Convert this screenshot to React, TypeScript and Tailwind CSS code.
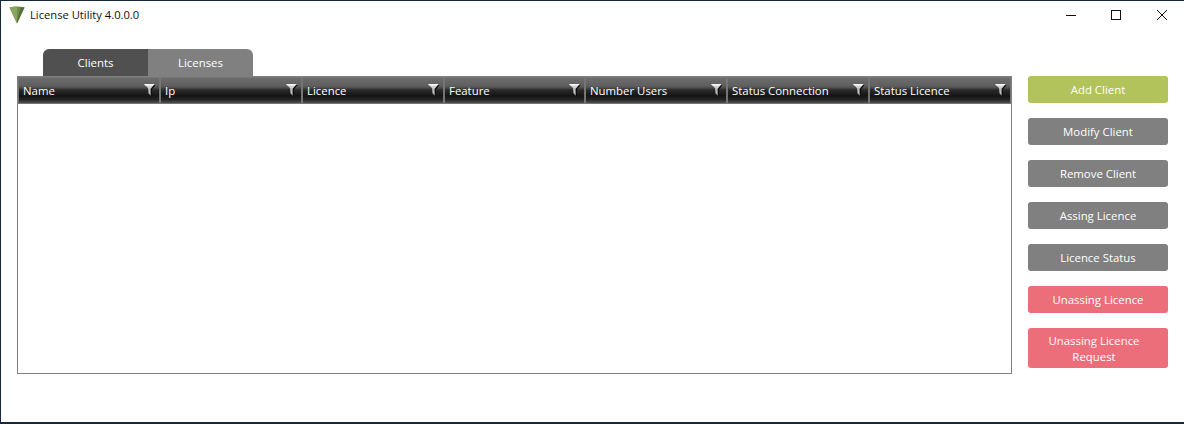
const cols: [string, number][] = [
  ["Name", 142],
  ["Ip", 142],
  ["Licence", 142],
  ["Feature", 141],
  ["Number Users", 142],
  ["Status Connection", 142],
  ["Status Licence", 142],
];

const buttons = [
  { t: "Add Client", c: "bg-[#b2c35b]" },
  { t: "Modify Client", c: "bg-[#808080]" },
  { t: "Remove Client", c: "bg-[#808080]" },
  { t: "Assing Licence", c: "bg-[#808080]" },
  { t: "Licence Status", c: "bg-[#808080]" },
  { t: "Unassing Licence", c: "bg-[#ec6e7b]" },
];

function Funnel() {
  return (
    <svg width="13" height="14" viewBox="0 0 13 14" className="absolute right-[3px] top-[5px]">
      <path d="M2 2 L12.5 2 L9 6.5 L9 13.5 L6.5 11 L6 6.5 Z" fill="#0c0c0c" />
      <path d="M1 1 L11.5 1 L8 5.5 L8 12.5 L5.6 10.4 L5.2 5.5 Z" fill="#cfcfcf" />
      <path d="M1 1 L11.5 1 L10 2.8 L2.6 2.8 Z" fill="#f4f4f4" />
      <path d="M6.8 5.5 L8 5.5 L8 12.5 L6.8 11.4 Z" fill="#7c7c7c" />
    </svg>
  );
}

export default function App() {
  return (
    <div
      className="w-[1184px] h-[424px] bg-white border-t border-l border-b-2 border-[#16293b] text-[11.4px] flex flex-col overflow-hidden"
      style={{ fontFamily: '"Open Sans", "Noto Sans", sans-serif' }}
    >
      <div className="h-[29px] flex items-center shrink-0">
        <svg width="16" height="18" viewBox="0 0 16 18" className="ml-[8px] mt-[-1px]">
          <path d="M0.5 1.5 Q8 -0.5 15.5 1.5 L8 17.5 Z" fill="#6f8c4a" />
          <path d="M0.5 1.5 Q4 0.5 8 0.5 L8 17.5 Z" fill="#8aa55f" />
          <path d="M12 1 L15.5 1.5 L8 17.5 L8 14 Z" fill="#55703c" />
        </svg>
        <span className="ml-[5px] text-[11.2px] text-[#111] mt-[-1px]">License Utility 4.0.0.0</span>
        <div className="ml-auto flex items-center mt-[-1px]">
          <svg width="10" height="10" viewBox="0 0 10 10" className="mr-[35px]">
            <path d="M0 5.5 H10" stroke="#111" strokeWidth="1" />
          </svg>
          <svg width="10" height="10" viewBox="0 0 10 10" className="mr-[36px]">
            <rect x="0.5" y="0.5" width="9" height="9" fill="none" stroke="#111" strokeWidth="1" />
          </svg>
          <svg width="10" height="10" viewBox="0 0 10 10" className="mr-[17px]">
            <path d="M0 0 L10 10 M10 0 L0 10" stroke="#111" strokeWidth="1" />
          </svg>
        </div>
      </div>
      <div className="flex pl-[16px] pt-[19px]">
        <div className="w-[995px] shrink-0">
          <div className="flex pl-[26px] h-[27px] text-white">
            <div className="w-[105px] rounded-tl-[6px] bg-[#505050] flex items-center justify-center">Clients</div>
            <div className="w-[105px] rounded-tr-[6px] bg-[#808080] flex items-center justify-center">Licenses</div>
          </div>
          <div className="h-[298px] border border-[#808080]">
            <div className="flex h-[27px]">
              {cols.map(([name, w]) => (
                <div
                  key={name}
                  className="relative shrink-0 h-full border border-[#757575] flex items-center pl-[4px] text-white bg-[linear-gradient(to_bottom,#6c6c6c_0%,#606060_30%,#505050_38%,#2a2a2a_48%,#141414_72%,#242424_86%,#505050_100%)]"
                  style={{ width: w }}
                >
                  <span className="mt-[1px] whitespace-nowrap">{name}</span>
                  <Funnel />
                </div>
              ))}
            </div>
          </div>
        </div>
        <div className="ml-[16px] w-[140px] pt-[27px] flex flex-col gap-[15px] text-white shrink-0">
          {buttons.map((b) => (
            <div key={b.t} className={`h-[27px] rounded-[3px] flex items-center justify-center ${b.c}`}>
              {b.t}
            </div>
          ))}
          <div className="h-[40px] rounded-[3px] bg-[#ec6e7b] flex items-center justify-center text-center leading-[16px] pr-[8px] pt-[1px]">
            Unassing Licence
            <br />
            Request
          </div>
        </div>
      </div>
    </div>
  );
}
